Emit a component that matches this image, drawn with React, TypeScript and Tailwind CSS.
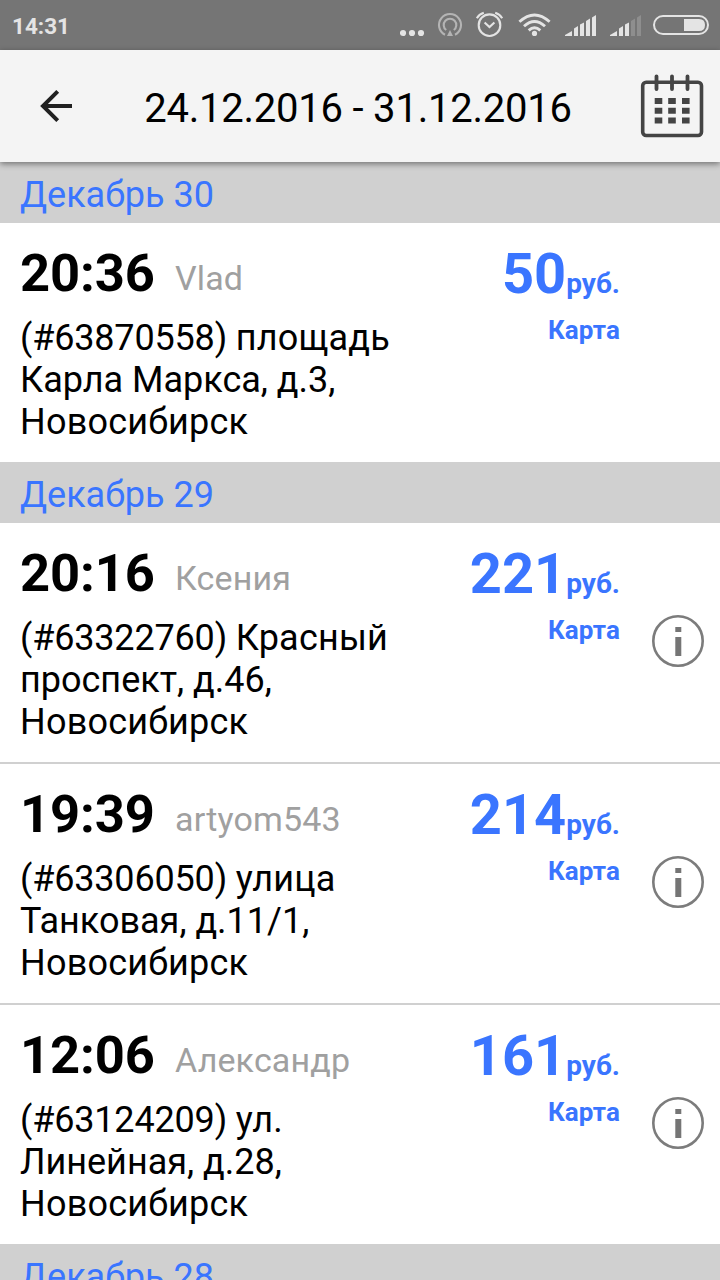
type Order = {
  id: string;
  time: string;
  client: string;
  address: string[];
  price: number;
  info?: boolean;
};

type Day = { title: string; orders: Order[] };

const days: Day[] = [
  {
    title: "Декабрь 30",
    orders: [
      {
        id: "63870558",
        time: "20:36",
        client: "Vlad",
        address: ["площадь", "Карла Маркса, д.3,", "Новосибирск"],
        price: 50,
      },
    ],
  },
  {
    title: "Декабрь 29",
    orders: [
      {
        id: "63322760",
        time: "20:16",
        client: "Ксения",
        address: ["Красный", "проспект, д.46,", "Новосибирск"],
        price: 221,
        info: true,
      },
      {
        id: "63306050",
        time: "19:39",
        client: "artyom543",
        address: ["улица", "Танковая, д.11/1,", "Новосибирск"],
        price: 214,
        info: true,
      },
      {
        id: "63124209",
        time: "12:06",
        client: "Александр",
        address: ["ул.", "Линейная, д.28,", "Новосибирск"],
        price: 161,
        info: true,
      },
    ],
  },
  { title: "Декабрь 28", orders: [] },
];

function StatusIcons() {
  return (
    <svg width="320" height="50" viewBox="400 0 320 50" fill="none">
      <g fill="#e4e4e4">
        <circle cx="403" cy="33" r="3.1" />
        <circle cx="412" cy="33" r="3.1" />
        <circle cx="421" cy="33" r="3.1" />
      </g>
      {/* Hotspot */}
      <g stroke="#b4b4b4" strokeWidth="2.1">
        <path d="M445 34.8a11 11 0 1 1 10 0" />
        <path d="M446.2 30a6.3 6.3 0 1 1 7.6 0" />
        <path d="M450 30l3 6h-6z" fill="#b4b4b4" stroke="none" />
      </g>
      {/* Alarm */}
      <g stroke="#e4e4e4" strokeWidth="2.1">
        <circle cx="489.5" cy="25.2" r="10.8" />
        <path d="M484.6 22.4l4.9 4.6 4.9-4.6" />
        <path d="M476.8 18.2q2.2-3.8 7-5.4M502.2 18.2q-2.2-3.8-7-5.4" />
      </g>
      {/* Wi-Fi */}
      <g stroke="#e4e4e4" strokeWidth="2.9">
        <path d="M519.4 21.8q15.1-13.8 30.2 0" />
        <path d="M524 26.2q10.5-9.6 21 0" />
        <path d="M528.7 30.4q5.8-5.2 11.6 0" />
        <circle cx="534.5" cy="33.4" r="2.6" fill="#e4e4e4" stroke="none" />
      </g>
      {/* Signal bars */}
      <g fill="#e4e4e4">
        <path d="M565 36v-1l7-4v5zM574 36v-7.5l4-2.5v10zM580 36v-11.5l4-2v13.5zM586 36v-15l4-2.5v17.5zM592 36v-18.5l4-2.5v21z" />
        <path d="M610 36v-1l7-4v5zM619 36v-7.5l4-2.5v10zM625 36v-11.5l4-2v13.5z" />
        <path d="M631 36v-15l4-2.5v17.5zM637 36v-18.5l4-2.5v21z" fill="#8e8e8e" />
      </g>
      {/* Battery */}
      <rect x="654" y="16" width="54" height="18" rx="9" stroke="#e4e4e4" strokeWidth="2" />
      <path d="M684 19h15q6 0 6 6t-6 6h-15z" fill="#e4e4e4" />
    </svg>
  );
}

function BackIcon() {
  return (
    <svg width="34" height="34" viewBox="39 89 34 34" fill="none" stroke="#212121" strokeWidth="4">
      <path d="M72 106H43M57.7 91.3L43 106l14.7 14.7" />
    </svg>
  );
}

function CalendarIcon() {
  return (
    <svg width="64" height="64" viewBox="640 74 64 64" fill="none" stroke="#444">
      <rect x="642.7" y="82.3" width="58.8" height="53.2" rx="3.5" strokeWidth="3.6" />
      <path d="M656.5 76.3v12.7M672 76.3v12.7M687.5 76.3v12.7" strokeWidth="3.8" strokeLinecap="round" />
      <path
        d="M654.7 101h7.6M668.2 101h7.6M682 101h7.6M654.7 110.8h7.6M668.2 110.8h7.6M682 110.8h7.6M654.7 120.5h7.6M668.2 120.5h7.6M682 120.5h7.6"
        strokeWidth="6"
      />
    </svg>
  );
}

function InfoIcon() {
  return (
    <svg width="52" height="52" viewBox="0 0 52 52" fill="none">
      <circle cx="26" cy="26" r="24.7" stroke="#7c7c7c" strokeWidth="2.6" />
      <path d="M23.3 12h6v5h-6zM23.3 22h6v19h-6z" fill="#757575" />
    </svg>
  );
}

function OrderRow({ order }: { order: Order }) {
  return (
    <article className="flex h-[239px] bg-white pl-5">
      <div className="w-[400px] pt-5">
        <div className="flex h-[60px] items-baseline whitespace-nowrap">
          <span className="w-[155px] text-[52.5px] leading-[60px] font-bold tracking-[-0.1px]">
            {order.time}
          </span>
          <span className="-translate-y-px text-[34px] leading-[40px] tracking-[0.15px] text-[#a0a0a0]">
            {order.client}
          </span>
        </div>
        <p className="mt-3.5 text-[36px] leading-[42px] whitespace-nowrap">
          <span className="tracking-[-0.17px]">(#{order.id}) </span>
          <span className="tracking-[0.2px]">{order.address[0]}</span>
          <br />
          {order.address[1]}
          <br />
          <span className="tracking-[0.22px]">{order.address[2]}</span>
        </p>
      </div>
      <div className="w-[200px] pt-[18px] text-right font-bold text-[#3a75ff]">
        <p className="h-[66px] text-[56px] leading-[66px] whitespace-nowrap">
          {order.price}
          <span className="text-[28px] leading-none">руб.</span>
        </p>
        <p className="mt-2 text-[26px] leading-[30px] tracking-[0.1px]">Карта</p>
      </div>
      {order.info && (
        <div className="pt-[92px] pl-8">
          <InfoIcon />
        </div>
      )}
    </article>
  );
}

export default function App() {
  return (
    <div className="flex h-[1280px] w-[720px] flex-col overflow-hidden bg-white font-['Roboto',sans-serif] text-black">
      <div className="flex h-[50px] shrink-0 items-center justify-between bg-[#757575] pl-3">
        <span className="pt-0.5 text-[22.5px] leading-7 font-bold text-[#e4e4e4]">14:31</span>
        <StatusIcons />
      </div>

      <header className="relative z-10 flex h-28 shrink-0 items-center bg-[#f4f4f4] pr-4 pl-[39px] shadow-[0_2px_6px_rgba(0,0,0,0.45)]">
        <BackIcon />
        <h1 className="flex-1 pt-1.5 pl-[3px] text-center text-[40px] leading-[48px] tracking-[-0.22px] whitespace-nowrap">
          24.12.2016 - 31.12.2016
        </h1>
        <CalendarIcon />
      </header>

      <main className="shrink-0">
        {days.map((day) => (
          <section key={day.title}>
            <h2 className="h-[61px] bg-[#d0d0d0] pt-3 pl-5 text-[36px] leading-[42px] text-[#3a75ff]">
              {day.title}
            </h2>
            <div className="flex flex-col gap-0.5 bg-[#d0d0d0]">
              {day.orders.map((order) => (
                <OrderRow key={order.id} order={order} />
              ))}
            </div>
          </section>
        ))}
      </main>
    </div>
  );
}
